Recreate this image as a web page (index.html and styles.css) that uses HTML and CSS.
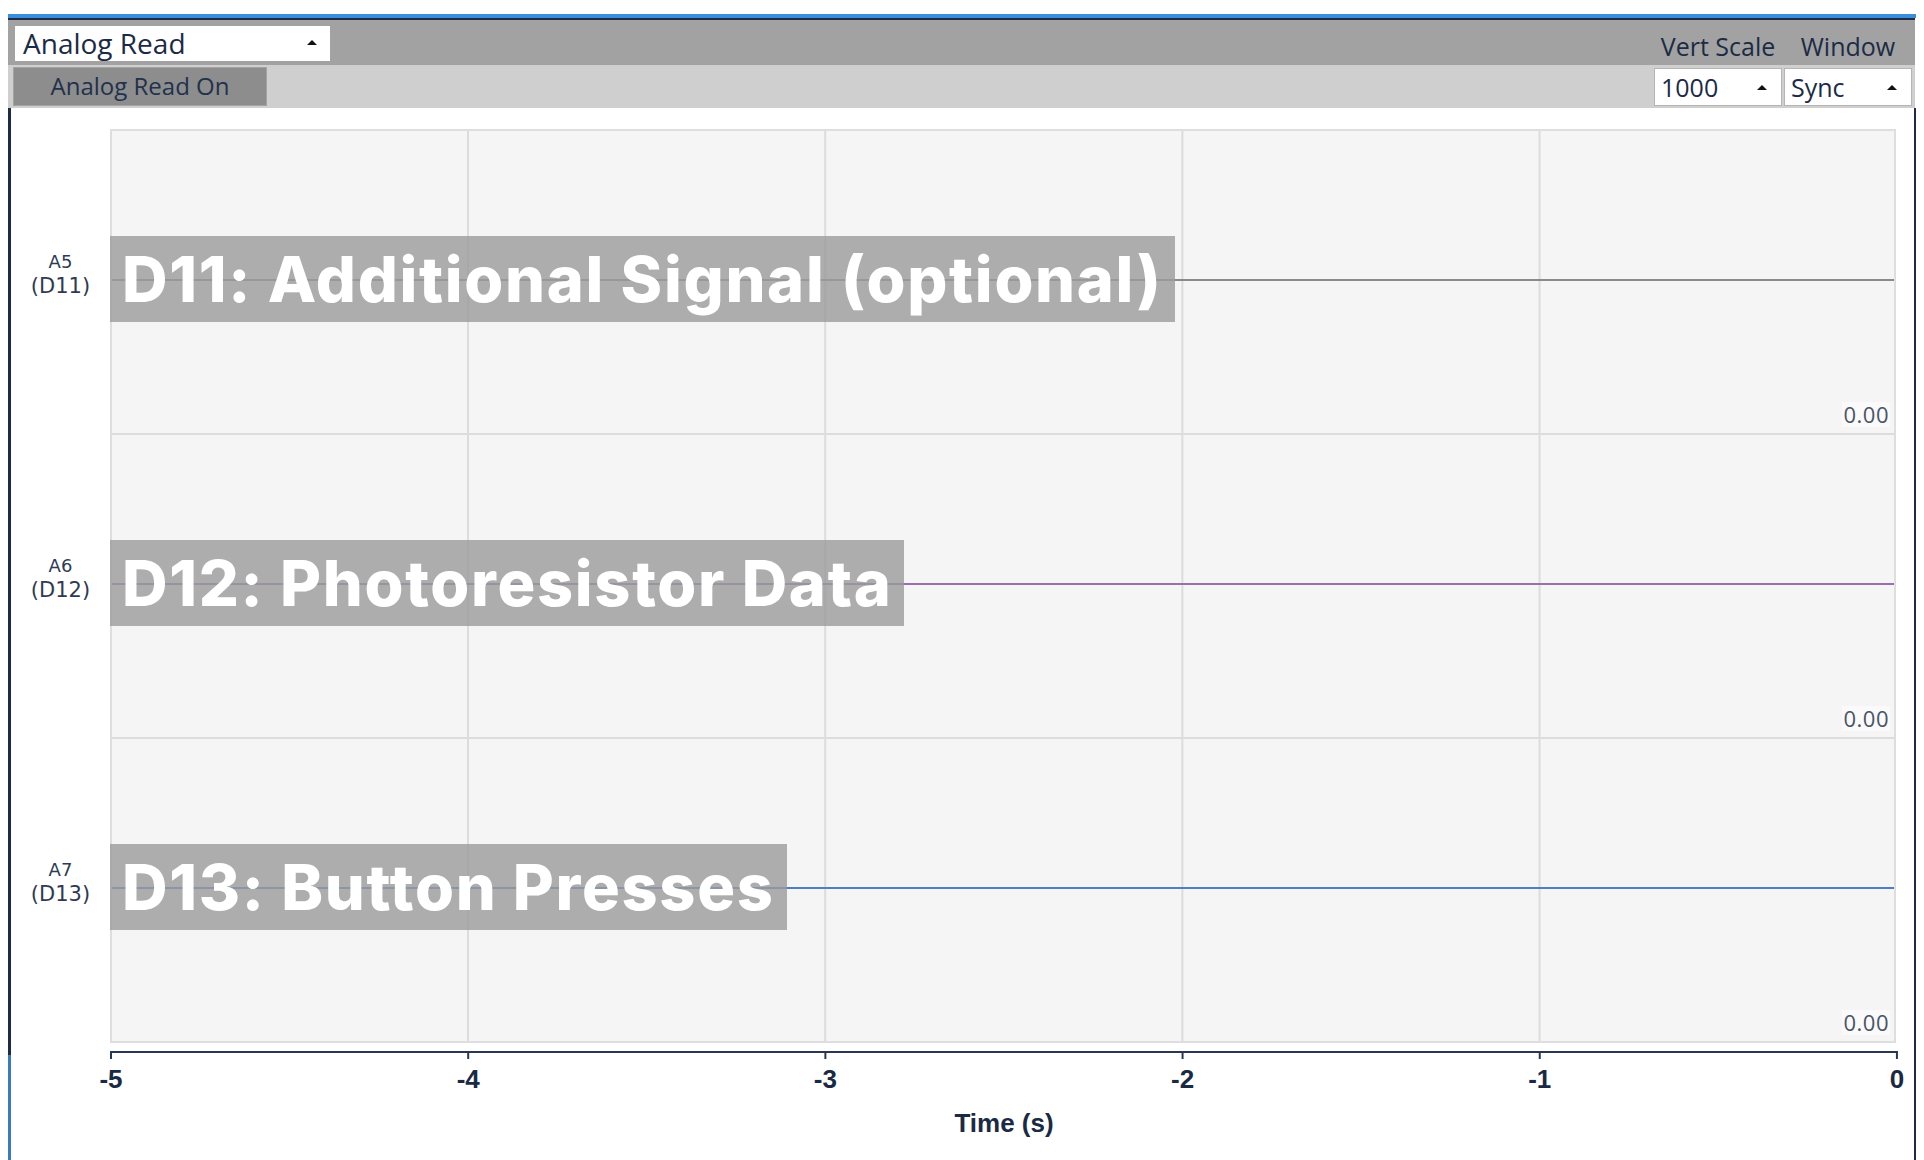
FILE: index.html
```html
<!DOCTYPE html>
<html lang="en">
<head>
<meta charset="utf-8">
<title>Analog Read</title>
<link rel="stylesheet" href="styles.css">
</head>
<body>
<div class="app">
  <div class="window">
    <div class="bar1">
      <div class="select select-main"><span>Analog Read</span><i class="tri"></i></div>
      <div class="spacer"></div>
      <div class="col-label">Vert Scale</div>
      <div class="col-label">Window</div>
    </div>
    <div class="bar2">
      <div class="btn">Analog Read On</div>
      <div class="spacer"></div>
      <div class="select select-sm"><span>1000</span><i class="tri"></i></div>
      <div class="select select-sm"><span>Sync</span><i class="tri"></i></div>
    </div>
    <div class="body">
      <div class="chart">
        <div class="ylabels">
          <div class="ylab"><span class="ya">A5</span><span class="yd">(D11)</span></div>
          <div class="ylab"><span class="ya">A6</span><span class="yd">(D12)</span></div>
          <div class="ylab"><span class="ya">A7</span><span class="yd">(D13)</span></div>
        </div>
        <div class="plot">
          <div class="row r1">
            <div class="tag">D11: Additional Signal (optional)</div>
            <span class="val">0.00</span>
          </div>
          <div class="row r2">
            <div class="tag">D12: Photoresistor Data</div>
            <span class="val">0.00</span>
          </div>
          <div class="row r3">
            <div class="tag">D13: Button Presses</div>
            <span class="val">0.00</span>
          </div>
        </div>
      </div>
      <div class="xaxis">
        <div class="axisline"></div>
        <div class="ticks"></div>
        <div class="ticklabels">
          <span>-5</span><span>-4</span><span>-3</span><span>-2</span><span>-1</span><span>0</span>
        </div>
        <div class="xtitle">Time (s)</div>
      </div>
    </div>
  </div>
</div>
</body>
</html>
```
FILE: styles.css
```css
html, body {
  margin: 0;
  padding: 0;
  background: #ffffff;
}

body {
  font-family: "Open Sans", "Noto Sans", sans-serif;
  color: #1c2b45;
}

.app {
  padding: 14px 0 0 8px;
}

.window {
  width: 1908px;
  height: 1146px;
  box-sizing: border-box;
  border-top: 4px solid #3b8fda;
  display: flex;
  flex-direction: column;
}

.spacer {
  flex: 1;
}

.bar1 {
  height: 47px;
  box-sizing: border-box;
  border-top: 2px solid #1f2c47;
  background: #a2a2a2;
  margin-right: 1px;
  padding: 0 3px 0 7px;
  display: flex;
  align-items: flex-start;
}

.bar2 {
  height: 43px;
  box-sizing: border-box;
  background: #cfcfcf;
  margin-right: 1px;
  padding: 0 3px 0 5px;
  display: flex;
  align-items: flex-start;
  gap: 2px;
}

.select {
  background: #ffffff;
  display: flex;
  align-items: center;
  justify-content: space-between;
  box-sizing: border-box;
}

.select-main {
  margin-top: 6px;
  width: 315px;
  height: 35px;
  padding: 0 13px 0 8px;
  font-size: 28px;
  line-height: 35px;
}

.select-sm {
  margin-top: 3px;
  width: 128px;
  height: 38px;
  border: 1px solid #b5b5b5;
  padding: 0 14px 0 6px;
  font-size: 25px;
  line-height: 36px;
}

.tri {
  display: block;
  width: 0;
  height: 0;
  border-left: 5px solid transparent;
  border-right: 5px solid transparent;
  border-bottom: 5px solid #111111;
}

.select-main .tri {
  margin-top: -2px;
}

.col-label {
  width: 128px;
  margin-left: 2px;
  text-align: center;
  font-size: 25px;
  line-height: 42px;
  padding-top: 5px;
}

.btn {
  margin-top: 2px;
  width: 254px;
  height: 39px;
  box-sizing: border-box;
  background: #8d8d8d;
  border: 1px solid #a3a3a3;
  color: #22314c;
  font-size: 24px;
  line-height: 36px;
  text-align: center;
}

.body {
  flex: 1;
  padding: 21px 0 0 3px;
  border-right: 2px solid #1e2b47;
  background: linear-gradient(to bottom, #1e2b47 calc(100% - 105px), #3b7cbd calc(100% - 105px)) no-repeat left top / 3px 100%;
}

.chart {
  display: flex;
}

.ylabels {
  width: 99px;
  height: 914px;
  box-sizing: border-box;
  padding: 2px 0;
  display: flex;
  flex-direction: column;
  gap: 2px;
  color: #2e3b52;
  font-family: "DejaVu Sans", "Open Sans", sans-serif;
}

.ylab {
  flex: 1;
  display: flex;
  flex-direction: column;
  align-items: center;
  justify-content: center;
  padding-bottom: 14px;
}

.ya {
  font-size: 18px;
  line-height: 22px;
}

.yd {
  font-size: 21px;
  line-height: 26px;
}

.plot {
  width: 1786px;
  height: 914px;
  box-sizing: border-box;
  border: 2px solid #dedede;
  background-color: #f5f5f5;
  background-image: linear-gradient(to right, #dcdcdc 0, #dcdcdc 2px, transparent 2px);
  background-size: 357.2px 100%;
  background-position: -2.2px 0;
  display: flex;
  flex-direction: column;
}

.row {
  flex: 1;
  position: relative;
  --c: #8a8a8a;
  background: linear-gradient(to bottom, transparent calc(50% - 3px), var(--c) calc(50% - 3px), var(--c) calc(50% - 1px), transparent calc(50% - 1px));
}

.r2, .r3 {
  border-top: 2px solid #dcdcdc;
}

.r2 {
  --c: #9b6eb1;
}

.r3 {
  --c: #4f7fc3;
}

.tag {
  position: absolute;
  left: -2px;
  top: calc(50% - 46px);
  height: 86px;
  padding: 0 12px 0 12px;
  background: rgba(155, 155, 155, 0.8);
  color: #ffffff;
  font-family: "Inter", "Open Sans", sans-serif;
  font-weight: 800;
  font-size: 63px;
  line-height: 86px;
  letter-spacing: 1.7px;
  white-space: nowrap;
}

.val {
  position: absolute;
  right: 4px;
  bottom: 6px;
  background: #fafafa;
  padding: 0 1px;
  font-size: 22px;
  line-height: 25px;
  letter-spacing: 0.5px;
  color: #4a5467;
}

.xaxis {
  width: 1788px;
  margin-left: 99px;
  color: #1b2a44;
  font-family: "Liberation Sans", Arial, sans-serif;
  font-weight: bold;
}

.axisline {
  margin-top: 8px;
  height: 2px;
  background: #2a3753;
}

.ticks {
  height: 6px;
  background-image: linear-gradient(to right, #2a3753 0, #2a3753 2px, transparent 2px);
  background-size: 357.2px 100%;
  background-repeat: repeat-x;
}

.ticklabels {
  margin-top: 5px;
  display: flex;
  justify-content: space-between;
  padding: 0 1px;
  font-size: 26px;
  line-height: 30px;
}

.ticklabels span {
  width: 0;
  display: flex;
  justify-content: center;
  white-space: nowrap;
}

.xtitle {
  margin-top: 14px;
  text-align: center;
  font-size: 26px;
  line-height: 30px;
}
```
